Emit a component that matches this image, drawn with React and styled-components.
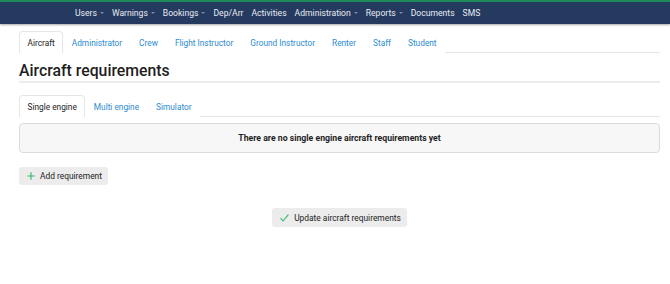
import React from 'react';
import styled, { createGlobalStyle } from 'styled-components';

const GlobalStyle = createGlobalStyle`
  body {
    margin: 0;
    background: #fff;
    font-family: Roboto, "Liberation Sans", sans-serif;
    color: #222;
  }
`;

const NavBar = styled.nav`
  box-sizing: border-box;
  height: 24px;
  background: #253a5f;
  border-top: 2px solid #1d8a5a;
  box-shadow: 0 1px 2px rgba(0, 0, 0, 0.35);
  display: flex;
  align-items: center;
  padding-left: 75px;
  gap: 8px;
`;

const NavItem = styled.span`
  color: #e8ecf3;
  font-size: 8.6px;
  display: flex;
  align-items: center;
  gap: 3px;
`;

const Caret = styled.span`
  width: 0;
  height: 0;
  border-left: 2.5px solid transparent;
  border-right: 2.5px solid transparent;
  border-top: 2.5px solid #7d8aa2;
`;

const Page = styled.main`
  padding: 7px 10px 0 19px;
`;

const TabList = styled.div`
  display: flex;
  border-bottom: 1px solid #e6e6e6;
`;

const Tab = styled.div`
  font-size: 8.3px;
  padding: 0 7.5px;
  height: 21px;
  display: flex;
  align-items: center;
  color: ${(p) => (p.active ? '#222' : '#2c8bd3')};
  border: 1px solid ${(p) => (p.active ? '#e6e6e6' : 'transparent')};
  border-bottom: none;
  border-radius: 4px 4px 0 0;
  background: #fff;
  margin-bottom: -1px;
`;

const Title = styled.h1`
  margin: 8px 0 0;
  font-size: 15.8px;
  font-weight: 500;
  line-height: 20px;
  padding-bottom: 0;
  border-bottom: 2px solid #ececec;
  color: #1e1e1e;
`;

const SubTabs = styled.div`
  margin-top: 12px;
`;

const Alert = styled.div`
  box-sizing: border-box;
  margin-top: 6px;
  height: 30px;
  background: #f7f7f8;
  border: 1px solid #dcdcdc;
  border-radius: 4px;
  display: flex;
  align-items: center;
  justify-content: center;
  font-size: 8.7px;
  font-weight: 700;
  color: #1e1e1e;
`;

const Button = styled.button`
  font-family: inherit;
  font-size: 8.4px;
  color: #222;
  background: #ececec;
  border: none;
  border-radius: 3px;
  height: ${(p) => p.height}px;
  padding: 0 6px 0 8px;
  display: inline-flex;
  align-items: center;
  gap: 5px;
`;

const AddRow = styled.div`
  margin-top: 12px;
`;

const Footer = styled.div`
  margin-top: 23px;
  display: flex;
  justify-content: center;
`;

const Plus = () => (
  <svg width="8" height="8" viewBox="0 0 8 8">
    <path d="M4 0.3v7.4M0.3 4h7.4" stroke="#35b56a" strokeWidth="1.1" />
  </svg>
);

const Check = () => (
  <svg width="9" height="8" viewBox="0 0 9 8">
    <path d="M0.6 4.2l2.4 2.8L8.4 0.6" stroke="#35b56a" strokeWidth="1.1" fill="none" />
  </svg>
);

const navItems = [
  ['Users', true],
  ['Warnings', true],
  ['Bookings', true],
  ['Dep/Arr', false],
  ['Activities', false],
  ['Administration', true],
  ['Reports', true],
  ['Documents', false],
  ['SMS', false],
];

const roles = ['Aircraft', 'Administrator', 'Crew', 'Flight Instructor', 'Ground Instructor', 'Renter', 'Staff', 'Student'];
const kinds = ['Single engine', 'Multi engine', 'Simulator'];

const App = () => (
  <>
    <GlobalStyle />
    <NavBar>
      {navItems.map(([label, dropdown]) => (
        <NavItem key={label}>
          {label}
          {dropdown && <Caret />}
        </NavItem>
      ))}
    </NavBar>
    <Page>
      <TabList>
        {roles.map((r, i) => (
          <Tab key={r} active={i === 0}>
            {r}
          </Tab>
        ))}
      </TabList>
      <Title>Aircraft requirements</Title>
      <SubTabs>
        <TabList>
          {kinds.map((k, i) => (
            <Tab key={k} active={i === 0}>
              {k}
            </Tab>
          ))}
        </TabList>
      </SubTabs>
      <Alert>There are no single engine aircraft requirements yet</Alert>
      <AddRow>
        <Button height={18}>
          <Plus />
          Add requirement
        </Button>
      </AddRow>
      <Footer>
        <Button height={19}>
          <Check />
          Update aircraft requirements
        </Button>
      </Footer>
    </Page>
  </>
);

export default App;
